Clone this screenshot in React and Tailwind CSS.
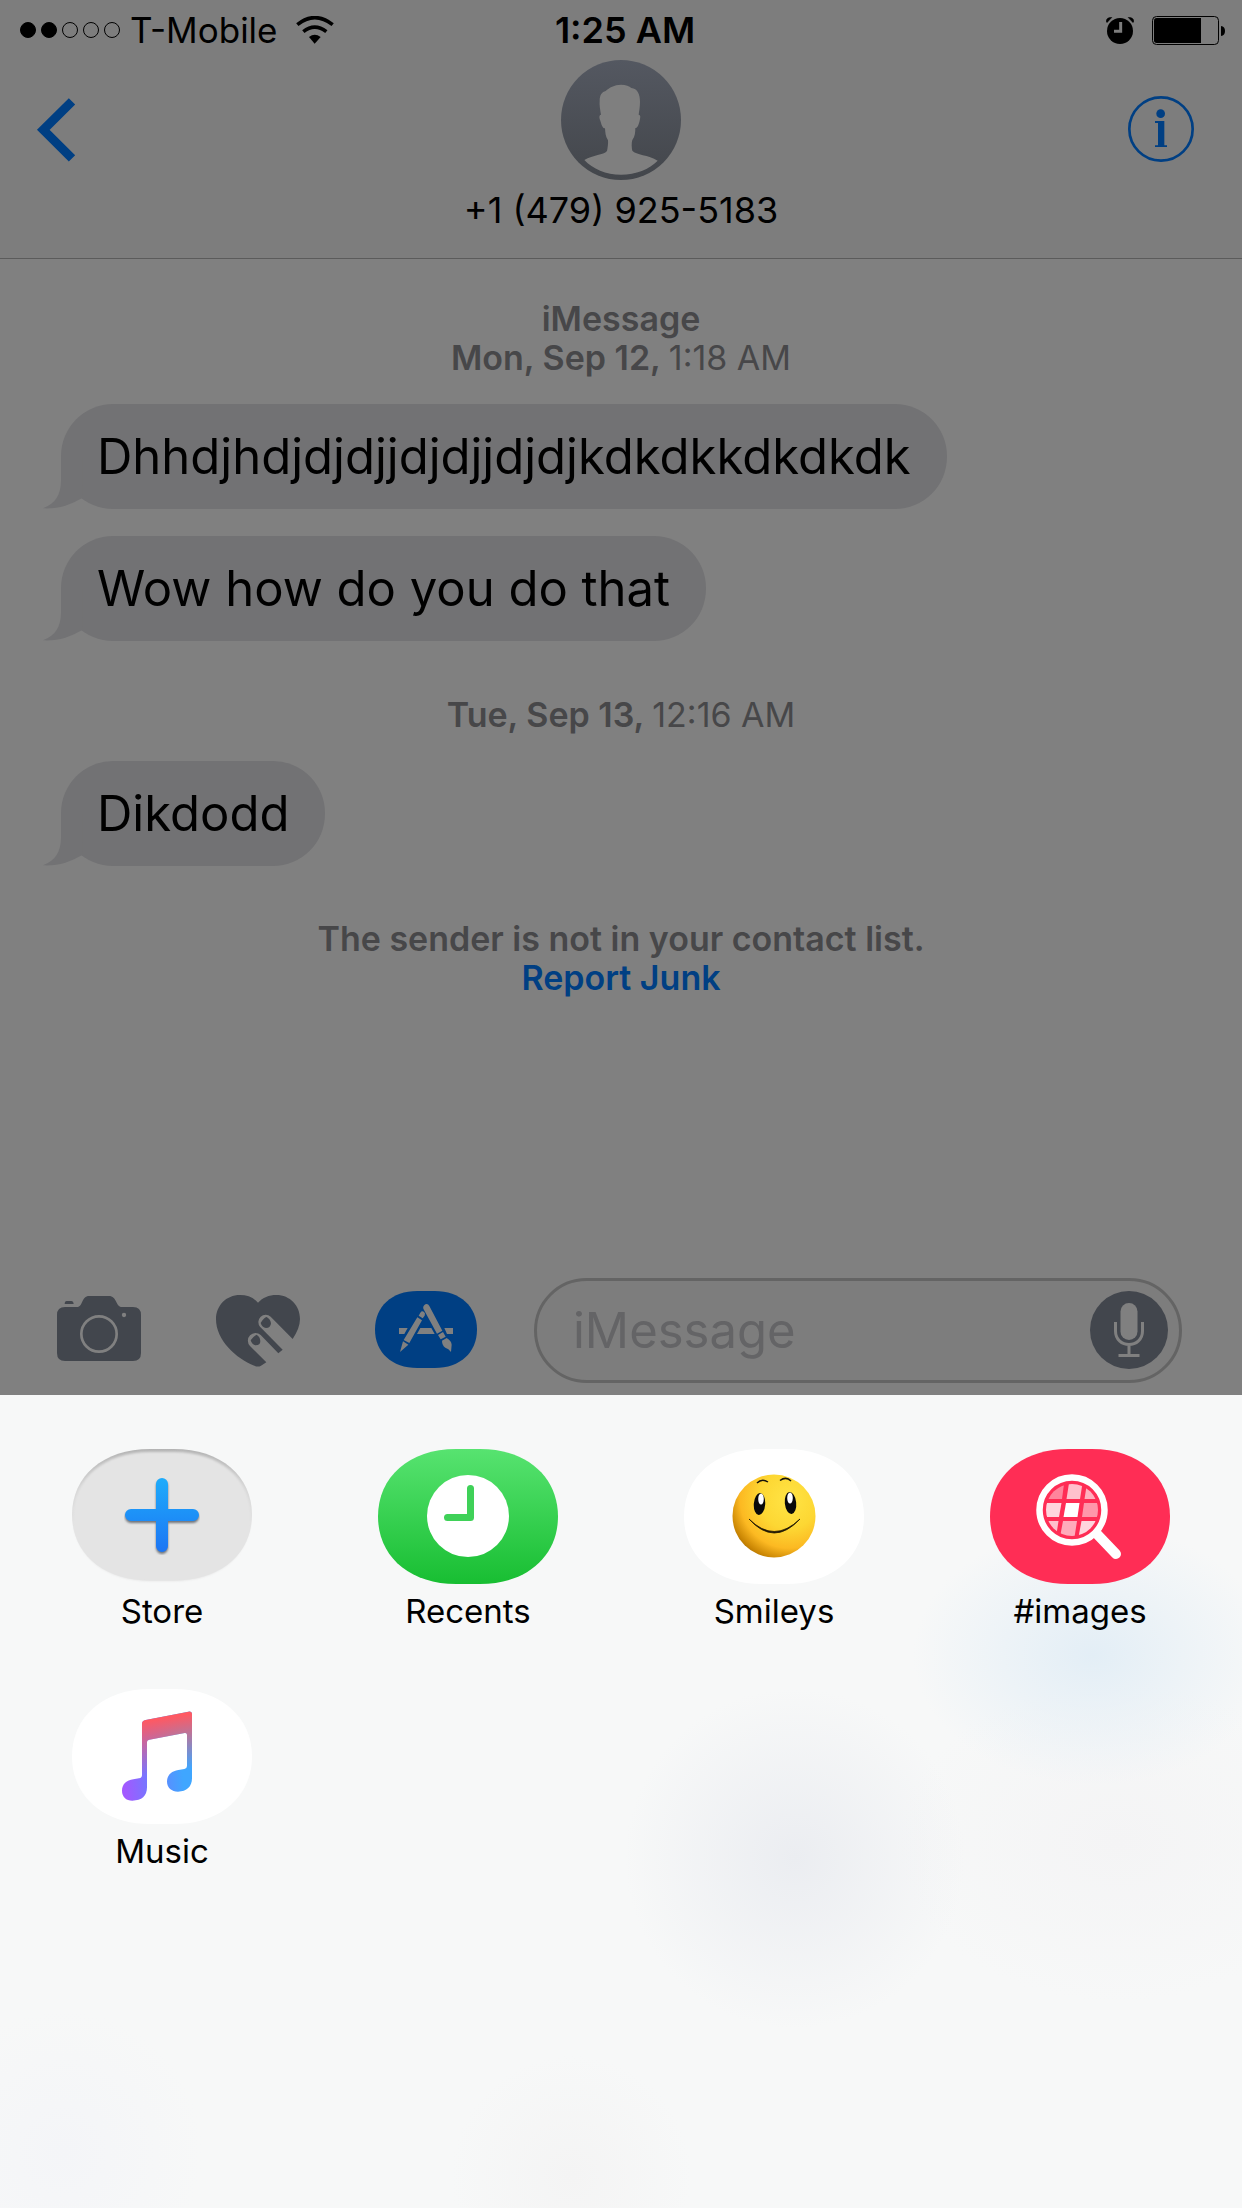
import React from "react";

const PILL =
  "M0 67.5 C0 28 31 0 78 0 H102 C149 0 180 28 180 67.5 C180 107 149 135 102 135 H78 C31 135 0 107 0 67.5 Z";

function StatusBar() {
  return (
    <div className="grid h-[60px] grid-cols-3 items-center pr-4 pl-5 text-black">
      <div className="flex items-center">
        <div className="flex gap-[5px]">
          {[true, true, false, false, false].map((on, i) => (
            <span
              key={i}
              className={
                on
                  ? "size-4 rounded-full border border-black bg-black"
                  : "size-4 rounded-full border border-black"
              }
            />
          ))}
        </div>
        <span className="ml-2.5 text-[35px] leading-[60px] whitespace-nowrap">T-Mobile</span>
        <svg className="ml-[18px] h-7 w-[38px]" viewBox="890 46 114 84" aria-label="Wi-Fi">
          <path d="M894 72 Q946 30 1000 72" fill="none" stroke="#000" strokeWidth="11" />
          <path d="M912 93 Q946 66 981 93" fill="none" stroke="#000" strokeWidth="11" />
          <path d="M929 109 Q946 95 964 109 L946 129 Z" />
        </svg>
      </div>
      <div className="pl-1 text-center text-[36px] leading-[60px] font-semibold whitespace-nowrap">1:25 AM</div>
      <div className="flex items-center justify-end gap-[18px]">
        <svg className="h-[27px] w-7" viewBox="198 51 84 81" aria-label="Alarm">
          <circle cx="240" cy="93" r="39" />
          <path d="M198 64 Q200 51 216 52 L201 68 Z M282 64 Q280 51 264 52 L279 68 Z" stroke="#000" strokeWidth="1" />
          <path d="M242 66 V94 H222" fill="none" stroke="#7d7d7d" strokeWidth="9" />
        </svg>
        <svg className="h-[29px] w-[74px]" viewBox="336 48 222 87" aria-label="Battery">
          <rect x="337.500" y="49.500" width="198" height="84" rx="12" fill="none" stroke="#000" strokeWidth="3" />
          <path d="M350 54 H483 V129 H350 Q342 129 342 121 V62 Q342 54 350 54 Z" />
          <path d="M543 78 Q555 80 555 93 Q555 106 543 108 Z" />
        </svg>
      </div>
    </div>
  );
}

function Header() {
  return (
    <header className="border-b border-[#5b5b5b] bg-[#7d7d7d]">
      <StatusBar />
      <div className="grid grid-cols-3 px-9 pb-[18px]">
        <button type="button" aria-label="Back" className="mt-[38px] h-16 w-10 justify-self-start">
          <svg className="h-16 w-10" viewBox="108 293 120 192">
            <path d="M216 303 L130 388.500 L216 474" fill="none" stroke="#003f83" strokeWidth="27" />
          </svg>
        </button>
        <div className="flex flex-col items-center">
          <svg className="size-[120px]" viewBox="423 180 360 360" aria-hidden="true">
            <defs>
              <linearGradient id="avatar" x1="0" y1="0" x2="0" y2="1">
                <stop offset="0" stopColor="#545861" />
                <stop offset="1" stopColor="#43464b" />
              </linearGradient>
            </defs>
            <circle cx="603" cy="360" r="180" fill="url(#avatar)" />
            <path
              fill="#7f7f7f"
              d="M603 254 C618 254 628 259 634 264 C652 265 660 283 660 305 C660 322 657 335 656 344 C663 345 661 353 659 362 C656 374 653 384 646 384 C646 396 645 410 637 420 C634 428 635 444 637 452 C648 465 685 464 713 482 C688 508 648 524 603 524 C558 524 518 507 493 480 C520 464 550 466 561 453 C563 444 565 430 564 421 C556 410 556 396 555 385 C547 385 544 372 541 362 C538 353 536 346 543 344 C540 328 538 315 539 303 C539 284 546 276 557 273 C568 263 583 254 603 254 Z"
            />
          </svg>
          <h1 className="text-[36px] leading-[60px] whitespace-nowrap text-black">+1 (479) 925-5183</h1>
        </div>
        <button type="button" aria-label="Details" className="mt-9 mr-3 size-[66px] justify-self-end">
          <svg className="size-[66px]" viewBox="264 288 198 198">
            <circle cx="363" cy="387" r="95" fill="none" stroke="#003f83" strokeWidth="8" />
            <circle cx="362" cy="341" r="13" fill="#003f83" />
            <path d="M345 363 H373 V436 H381 V441 H345 V436 H354 V369 H345 Z" fill="#003f83" />
          </svg>
        </button>
      </div>
    </header>
  );
}

function Bubble({ children }) {
  return (
    <p className="relative w-fit rounded-[52px] bg-[#727274] px-9 text-[49px] leading-[105px] whitespace-nowrap text-black">
      <svg className="absolute bottom-0 -left-[18px] h-[52px] w-10" viewBox="128 231 120 156" aria-hidden="true">
        <path d="M182 231 V300 C182 345 165 370 128 385 C170 388 210 375 247 353 V231 Z" fill="#727274" />
      </svg>
      <span className="relative">{children}</span>
    </p>
  );
}

function Conversation() {
  return (
    <main className="flex flex-1 flex-col px-[61px] pt-10 text-[#474749]">
      <p className="text-center text-[34px] leading-[39px] font-semibold">
        iMessage
        <br />
        Mon, Sep 12, <span className="font-normal">1:18 AM</span>
      </p>
      <div className="mt-[27px] flex flex-col gap-[27px]">
        <Bubble>Dhhdjhdjdjdjjdjdjjdjdjkdkdkkdkdkdk</Bubble>
        <Bubble>Wow how do you do that</Bubble>
      </div>
      <p className="mt-[54px] text-center text-[34px] leading-[39px] font-semibold">
        Tue, Sep 13, <span className="font-normal">12:16 AM</span>
      </p>
      <div className="mt-[27px]">
        <Bubble>Dikdodd</Bubble>
      </div>
      <p className="mt-[53px] text-center text-[34px] leading-[39px] font-semibold">
        The sender is not in your contact list.
        <br />
        <a href="#report" className="text-[#003f83]">Report Junk</a>
      </p>
    </main>
  );
}

function Toolbar() {
  return (
    <div className="flex items-center pr-[60px] pb-3 pl-[57px]">
      <button type="button" aria-label="Camera" className="mr-[75px] shrink-0 pb-1">
        <svg className="h-[65px] w-[84px]" viewBox="81 108 252 195" fill="#42464d">
          <path d="M105 141 H141 C160 141 153 108 178 108 H236 C262 108 256 141 276 141 H309 Q333 141 333 165 V279 Q333 303 309 303 H105 Q81 303 81 279 V165 Q81 141 105 141 Z" />
          <path d="M104 132 Q104 123 110 123 H124 Q130 123 131 132 Z" />
          <circle cx="207" cy="222" r="53" fill="none" stroke="#808080" strokeWidth="8" />
          <circle cx="282" cy="165" r="6.500" fill="#808080" />
        </svg>
      </button>
      <button type="button" aria-label="Digital Touch" className="mr-[75px] shrink-0">
        <svg className="h-[72px] w-[84px]" viewBox="558 105 252 216" fill="#42464d">
          <path d="M684 128 C670 112 652 105 630 105 C588 105 558 137 558 178 C558 240 618 296 673 317 Q684 322 693 317 L709 307 L660 258 A23 23 0 0 1 692 225 L745 280 L758 269 L690 200 A22 22 0 0 1 722 170 L788 237 C802 216 810 196 810 177 C810 137 780 105 739 105 C717 105 698 113 684 128 Z" />
          <path d="M692 189 Q702 173 710 171 Q721 177 723 190 Q722 204 708 204 Q696 203 692 189 Z M662 241 Q672 227 680 224 Q690 230 691 243 Q691 256 677 256 Q666 255 662 241 Z" />
        </svg>
      </button>
      <button type="button" aria-label="Apps" className="mr-[57px] shrink-0 pb-0.5">
        <svg className="h-[77px] w-[102px]" viewBox="1035 93 306 231" fill="#808080">
          <path fill="#003f83" d="M1035 208.500 C1035 140 1085 93 1162 93 H1214 C1291 93 1341 140 1341 208.500 C1341 277 1291 324 1214 324 H1162 C1085 324 1035 277 1035 208.500 Z" />
          <path d="M1107 204 H1133 L1123 222 H1107 Z M1171 204 H1204 L1214 222 H1161 Z M1243 204 H1269 V222 H1251 Z" />
          <path d="M1166 167 L1171 158 Q1176 151 1182 156 Q1187 159 1184 167 L1178 175 Z M1162 172 L1176 181 L1138 249 L1121 240 Z M1119 244 L1135 254 L1110 276 Z" />
          <path d="M1180 146 Q1178 138 1186 133 Q1194 130 1198 138 L1237 212 L1221 221 Z M1224 225 L1239 216 L1247 230 L1232 238 Z M1236 242 L1250 234 Q1264 242 1265 254 L1263 276 Q1256 266 1246 263 Q1236 256 1236 242 Z" />
        </svg>
      </button>
      <div className="flex h-[105px] min-w-0 flex-1 items-center rounded-[53px] border-[3px] border-[#646464] bg-[#7d7d7d] pr-[11px] pl-9">
        <input
          type="text"
          aria-label="Message"
          placeholder="iMessage"
          className="min-w-0 flex-1 bg-transparent text-[49px] leading-[60px] text-black outline-none placeholder:text-[#646466]"
        />
        <button type="button" aria-label="Record audio" className="shrink-0 pb-0.5">
          <svg className="size-[78px]" viewBox="0 0 78 78">
            <circle cx="39" cy="39" r="39" fill="#42464d" />
            <rect x="30.500" y="12" width="17" height="37" rx="8.500" fill="#808080" />
            <path d="M25.500 31 V40 C25.500 58 52.500 58 52.500 40 V31 M39 54 V64 M28.500 64.500 H49.500" fill="none" stroke="#808080" strokeWidth="3" />
          </svg>
        </button>
      </div>
    </div>
  );
}

function StoreIcon() {
  return (
    <>
      <defs>
        <linearGradient id="plus" gradientUnits="userSpaceOnUse" x1="0" y1="29" x2="0" y2="103">
          <stop offset="0" stopColor="#1eacfb" />
          <stop offset="1" stopColor="#1c75f4" />
        </linearGradient>
        <linearGradient id="rim" x1="0" y1="0" x2="0" y2="1">
          <stop offset="0" stopColor="#b4b4b4" />
          <stop offset="0.300" stopColor="#d6d6d6" />
          <stop offset="0.600" stopColor="#e4e4e4" />
        </linearGradient>
        <filter id="soft" x="-10%" y="-10%" width="120%" height="120%">
          <feGaussianBlur stdDeviation="1" />
        </filter>
      </defs>
      <path d={PILL} fill="url(#rim)" transform="matrix(1 0 0 0.975 0 0)" />
      <path d={PILL} fill="#e4e4e4" transform="matrix(0.985 0 0 0.955 1.350 3)" filter="url(#soft)" />
      <path d="M59 68 H121 M90 37 V99" stroke="#70757c" strokeWidth="12" strokeLinecap="round" filter="url(#soft)" />
      <path
        d="M59 60 H84 V35 A6 6 0 0 1 96 35 V60 H121 A6 6 0 0 1 121 72 H96 V97 A6 6 0 0 1 84 97 V72 H59 A6 6 0 0 1 59 60 Z"
        fill="url(#plus)"
      />
    </>
  );
}

function RecentsIcon() {
  return (
    <>
      <defs>
        <linearGradient id="green" gradientUnits="userSpaceOnUse" x1="0" y1="0" x2="0" y2="135">
          <stop offset="0" stopColor="#57e370" />
          <stop offset="1" stopColor="#18be32" />
        </linearGradient>
      </defs>
      <path d={PILL} fill="url(#green)" />
      <circle cx="90" cy="67" r="41" fill="#fff" />
      <path d="M92.500 39.500 V68.500 H69.500" fill="none" stroke="#3fd158" strokeWidth="7" strokeLinecap="round" strokeLinejoin="round" />
    </>
  );
}

function SmileysIcon() {
  return (
    <>
      <defs>
        <radialGradient id="face" cx="0.680" cy="0.300" r="0.840">
          <stop offset="0" stopColor="#ffe445" />
          <stop offset="0.420" stopColor="#fdd733" />
          <stop offset="0.700" stopColor="#fcb922" />
          <stop offset="0.880" stopColor="#c98503" />
          <stop offset="1" stopColor="#8f5c00" />
        </radialGradient>
      </defs>
      <path d={PILL} fill="#fff" />
      <circle cx="90" cy="67" r="41.500" fill="url(#face)" />
      <ellipse cx="75.500" cy="55" rx="5.700" ry="11" fill="#0a0a0a" transform="rotate(4 75.500 55)" />
      <ellipse cx="106.500" cy="54" rx="5.700" ry="11" fill="#0a0a0a" transform="rotate(-6 106.500 54)" />
      <ellipse cx="77" cy="50" rx="2.800" ry="5.500" fill="#fff" />
      <ellipse cx="106" cy="49" rx="2.800" ry="5.500" fill="#fff" />
      <path d="M73 34 Q78 29 84 33 M96 31.500 Q102 27 107 32" fill="none" stroke="#15120a" strokeWidth="1.500" />
      <path d="M65 70 Q90 95 116 70 Q90 98 65 70 Z" fill="#1d1503" stroke="#1d1503" strokeWidth="0.800" />
    </>
  );
}

function ImagesIcon() {
  return (
    <>
      <defs>
        <clipPath id="lens">
          <circle cx="82" cy="61" r="26" />
        </clipPath>
      </defs>
      <path d={PILL} fill="#ff2d55" />
      <path d="M106 84 L126 105" stroke="#fff" strokeWidth="10" strokeLinecap="round" />
      <circle cx="82" cy="61" r="32.500" fill="#ff2d55" stroke="#fff" strokeWidth="6.500" />
      <g clipPath="url(#lens)" fill="#fff">
        <path d="M50 35 H74 L72 50 H50 Z" opacity="0.420" />
        <path d="M79 34 H92.500 L90 50 H76.500 Z" opacity="0.700" />
        <path d="M97 34 H112 V50 H94.500 Z" opacity="0.620" />
        <path d="M50 54 H71.500 L69 68 H50 Z" opacity="0.800" />
        <path d="M76 54 H89.500 L87.500 68 H73.500 Z" />
        <path d="M94 54 H112 V68 H92 Z" opacity="0.500" />
        <path d="M50 72 H68.500 L66 88 H50 Z" opacity="0.700" />
        <path d="M73 72 H87 L84.500 88 H70 Z" opacity="0.600" />
        <path d="M91.500 72 H112 V88 H88.500 Z" opacity="0.800" />
      </g>
    </>
  );
}

const NOTE =
  "M276 162 Q276 152 287 150 L415 125 Q426 123 426 133 V325 C426 350 410 365 384 365 C365 365 351 352 351 335 C351 315 365 303 385 300 L403 297 Q411 295 411 288 V194 Q411 188 404 189 L298 209 Q291 210 291 216 V352 C291 378 275 392 247 392 C228 392 216 380 216 362 C216 342 230 331 250 328 L267 325 Q276 323 276 315 Z";

function MusicIcon() {
  return (
    <>
      <defs>
        <linearGradient id="noteBase" gradientUnits="userSpaceOnUse" x1="225" y1="350" x2="400" y2="330">
          <stop offset="0" stopColor="#a259ff" />
          <stop offset="0.450" stopColor="#6f7bff" />
          <stop offset="1" stopColor="#3fa6ff" />
        </linearGradient>
        <linearGradient id="noteTop" gradientUnits="userSpaceOnUse" x1="300" y1="150" x2="325" y2="310">
          <stop offset="0" stopColor="#ff5962" />
          <stop offset="1" stopColor="#ff5962" stopOpacity="0" />
        </linearGradient>
      </defs>
      <path d={PILL} fill="#fff" />
      <g transform="matrix(0.333333 0 0 0.333333 -22 -19)">
        <path d={NOTE} fill="url(#noteBase)" />
        <path d={NOTE} fill="url(#noteTop)" />
      </g>
    </>
  );
}

const APPS = [
  { name: "Store", Icon: StoreIcon },
  { name: "Recents", Icon: RecentsIcon },
  { name: "Smileys", Icon: SmileysIcon },
  { name: "#images", Icon: ImagesIcon },
  { name: "Music", Icon: MusicIcon },
];

function AppDrawer() {
  return (
    <section
      aria-label="Apps"
      className="min-h-[813px] bg-[#f7f8f8] bg-[radial-gradient(180px_130px_at_88%_32%,#e3eef6,#e3eef600),radial-gradient(170px_170px_at_64%_57%,#ebedf1,#ebedf100),radial-gradient(220px_160px_at_90%_55%,#f4f4f5,#f4f4f500),radial-gradient(140px_140px_at_5%_93%,#f4f5f8,#f4f5f800),radial-gradient(120px_120px_at_46%_96%,#f4f4f4,#f4f4f400)] px-[72px] pt-[54px]"
    >
      <ul className="grid grid-cols-[repeat(4,180px)] justify-between gap-y-[50px]">
        {APPS.map(({ name, Icon }) => (
          <li key={name}>
            <button type="button" className="flex w-full flex-col items-center">
              <svg className="h-[135px] w-[180px]" viewBox="0 0 180 135" aria-hidden="true">
                <Icon />
              </svg>
              <span className="text-[33px] leading-[55px] whitespace-nowrap text-black">{name}</span>
            </button>
          </li>
        ))}
      </ul>
    </section>
  );
}

export default function App() {
  return (
    <div className="flex min-h-screen flex-col bg-[#808080] font-[Inter,'Liberation_Sans',sans-serif]">
      <Header />
      <Conversation />
      <Toolbar />
      <AppDrawer />
    </div>
  );
}
